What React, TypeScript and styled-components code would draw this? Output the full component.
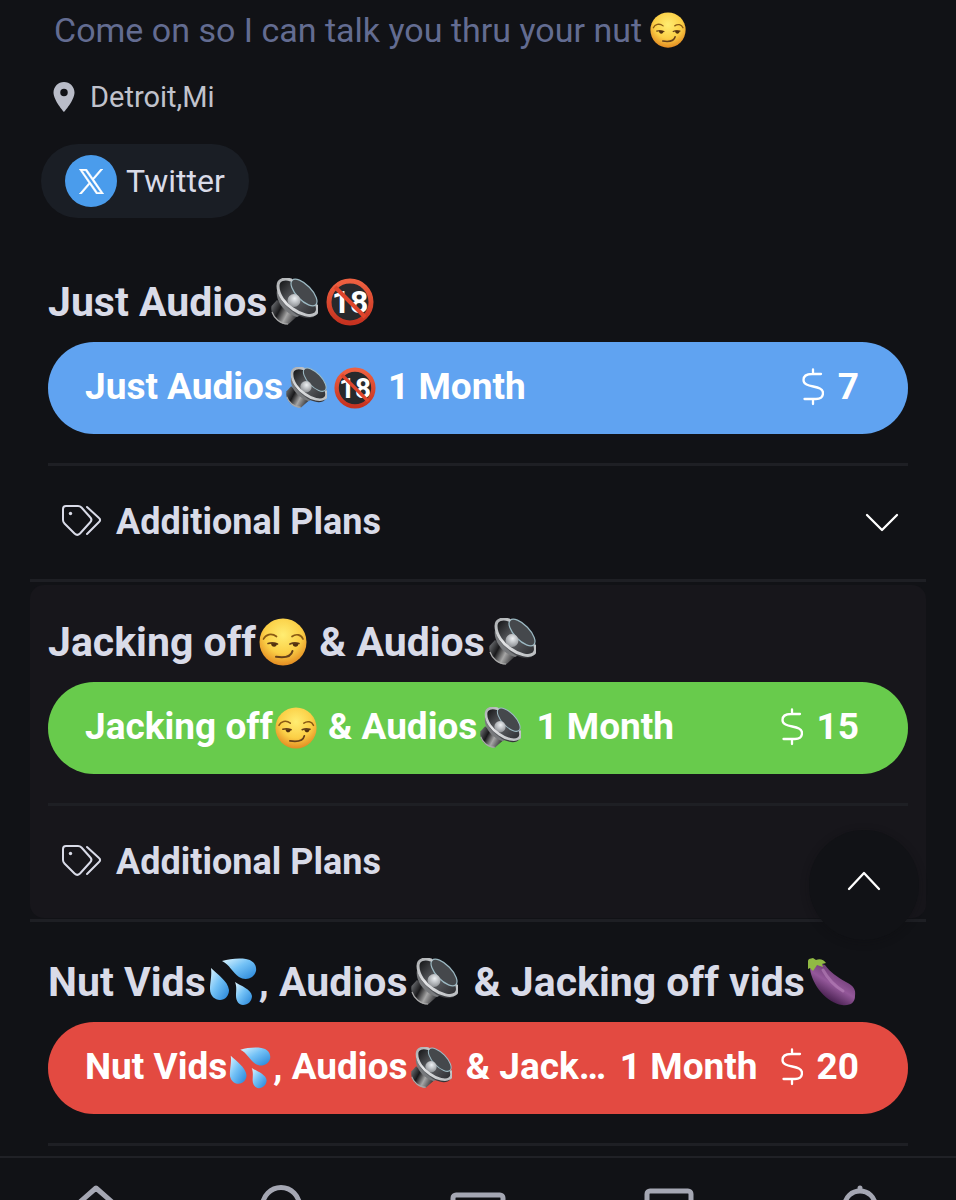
import type { ReactNode } from 'react'
import styled, { createGlobalStyle } from 'styled-components'

const GlobalStyle = createGlobalStyle`
  * {
    box-sizing: border-box;
  }
  body {
    margin: 0;
    background: #111216;
    font-family: Roboto, 'Liberation Sans', sans-serif;
  }
  h2, p {
    margin: 0;
  }
  button {
    border: 0;
    font-family: inherit;
    cursor: pointer;
  }
`
const Page = styled.div`
  display: flex;
  flex-direction: column;
  height: 100vh;
  color: #d9dbe8;
`
const Main = styled.main`
  flex: 1;
  min-height: 0;
  overflow: hidden;
  padding: 0 30px;
`
const Profile = styled.header`
  display: flex;
  flex-direction: column;
  align-items: flex-start;
  padding-left: 11px;
  margin-bottom: 27px;
`
const Tagline = styled.p`
  display: flex;
  align-items: center;
  gap: 6px;
  height: 60px;
  padding-left: 13px;
  font-size: 34px;
  color: #636c91;
`
const Location = styled.p`
  display: flex;
  align-items: center;
  gap: 8px;
  height: 40px;
  margin: 17px 0 27px 5px;
  font-size: 29px;
  color: #c0c2cc;
`
const SocialLink = styled.a`
  display: flex;
  align-items: center;
  gap: 9px;
  height: 74px;
  padding: 0 24px;
  border-radius: 37px;
  background: #1a1e25;
  color: #d9dbe8;
  font-size: 32px;
  text-decoration: none;
`
const SocialBadge = styled.span`
  display: flex;
  align-items: center;
  justify-content: center;
  width: 52px;
  height: 52px;
  border-radius: 50%;
  background: #4a9cec;
`
const PlanItem = styled.section<{ $raised?: boolean }>`
  padding: 33px 18px 0;
  border-radius: 14px;
  background: ${({ $raised }) => ($raised ? '#17161b' : 'transparent')};
`
const PlanTitle = styled.h2`
  height: 48px;
  margin-bottom: 16px;
  font-size: 41px;
  font-weight: 700;
  line-height: 48px;
  white-space: nowrap;

  svg {
    margin-left: 3px;
  }
`
const SubscribeButton = styled.button<{ $color: string }>`
  display: flex;
  align-items: center;
  width: 100%;
  height: 92px;
  padding: 0 49px 2px 37px;
  border-radius: 46px;
  background: ${({ $color }) => $color};
  color: #fff;
  font-size: 37px;
  font-weight: 700;
  line-height: 48px;
  white-space: nowrap;
`
const PlanName = styled.span`
  min-width: 0;
  overflow: hidden;
  text-overflow: ellipsis;
`
const Duration = styled.span`
  flex: none;
  margin: 0 23px 0 10px;
`
const Price = styled.span`
  display: flex;
  flex: none;
  align-items: center;
  gap: 14px;
  margin-left: auto;
`
const Divider = styled.hr`
  height: 3px;
  margin: 29px 0 0;
  border: 0;
  background: #1e1f24;
`
const PlanSeparator = styled(Divider)`
  margin: 1px 0 3px;
`
const PlansToggle = styled.button`
  display: flex;
  align-items: center;
  gap: 14px;
  width: 100%;
  height: 112px;
  padding: 0 9px 0 13px;
  background: none;
  color: #d9dbe8;
  font-size: 36px;
  font-weight: 700;

  svg:last-child {
    margin-left: auto;
  }
`
const EmojiSvg = styled.svg<{ $size: number; $wide: boolean }>`
  flex: none;
  width: ${({ $size }) => $size}px;
  height: ${({ $size }) => $size}px;
  margin: 0 ${({ $wide }) => ($wide ? 5 : 2)}px 0 2px;
  vertical-align: -10px;
`
const ScrollTopButton = styled.button`
  position: fixed;
  right: 37px;
  bottom: 260px;
  display: flex;
  align-items: center;
  justify-content: center;
  width: 110px;
  height: 110px;
  padding: 0 0 8px;
  border-radius: 50%;
  background: #111216;
  box-shadow: 0 2px 8px rgba(14, 14, 18, 0.3);
`
const NavBar = styled.nav`
  display: flex;
  flex: none;
  height: 44px;
  padding-top: 26px;
  overflow: hidden;
  border-top: 2px solid #202126;
`
const NavItem = styled.a`
  display: flex;
  flex: 1;
  justify-content: center;
`
const NavIcon = styled.svg`
  flex: none;
  width: 60px;
  height: 60px;
  fill: none;
  stroke: #a5a7b3;
  stroke-width: 5;
  stroke-linejoin: round;
  stroke-linecap: round;
`

type EmojiName = 'smirk' | 'speaker' | 'adults' | 'drops' | 'eggplant'

const emojiArt: Record<EmojiName, ReactNode> = {
  smirk: (
    <>
      <circle cx="24" cy="24" r="23.5" fill="url(#face)" />
      <g fill="none" stroke="#65401a" strokeLinecap="round" strokeWidth="1.7">
        <path d="M4.500 21c2-4.500 8-6.500 13-2.500M33 18.500c4-3 9-2 11 2.500" stroke="#8a5b14" />
        <path d="M9 25.500c3-1 6-1 9.500.500M31 26c3-1.500 6-1.500 9-.500" />
        <path d="M17 38.800c8 1.200 15 1 16.500-5.800" strokeWidth="2" />
      </g>
      <path d="M12 25.300h6c0 5-6 4.500-6 0zM33.500 25.300h6c0 5-6 4.500-6 0z" fill="#51310f" />
    </>
  ),
  speaker: (
    <>
      <path d="M7 22 1.500 28C0 36 7 46 18 46.500l9-8z" fill="url(#magnet)" />
      <path d="M2 34c2 6 8 12 16 12" fill="none" stroke="#aaa" strokeWidth="1.200" />
      <path d="M7 12c-2 9 6 23 20 27l6-3z" fill="#77797c" />
      <ellipse cx="27.500" cy="20.500" rx="25" ry="13.500" transform="rotate(43 27.500 20.500)" fill="url(#cone)" />
      <ellipse cx="34" cy="14.500" rx="17" ry="7.500" transform="rotate(46 34 14.500)" fill="#45484c" stroke="#9dbac4" strokeWidth="1.200" />
      <circle cx="24" cy="22.500" r="6.500" fill="url(#dome)" />
      <path d="M21 2C15 0 8 1 8 8c0 9 7 18 15 23 8 6 18 8 22 5 2-1 3-4 2-8" fill="none" stroke="url(#rim)" strokeWidth="3" strokeLinecap="round" />
    </>
  ),
  adults: (
    <>
      <circle cx="24" cy="24" r="21" fill="#28292c" />
      <text x="24" y="35" textAnchor="middle" fontFamily="Roboto, sans-serif" fontSize="32" fontWeight="700" fill="#fff">18</text>
      <circle cx="24" cy="24" r="21" fill="none" stroke="url(#ring)" strokeWidth="5" />
      <path d="M9 9l30 30" stroke="#df452c" strokeWidth="4" />
    </>
  ),
  drops: (
    <>
      <path d="M13 3C20 1 29 0 37 1c7 1 11 6 10 12-2 8-11 10-17 6C24 15 20 6 13 3z" fill="url(#water)" />
      <path d="M2 10c6 6 17 13 18 22 0 6-4 10-9 10S1 38 1 31c0-7 2-13 1-21z" fill="url(#water)" />
      <path d="M26 24c6 4 16 7 17 14 0 5-4 9-9 9-4 0-7-4-7-9 0-5 1-9-1-14z" fill="url(#water)" />
    </>
  ),
  eggplant: (
    <>
      <path d="M2 11c2-4 8-7 15-4 6 8 11 11 21 17 8 4 10 8 9 14 0 7-5 10-13 9C19 45 4 27 2 11z" fill="url(#skin)" />
      <path d="M15 12c5 9 10 15 20 21" fill="none" stroke="#bd89bf" strokeLinecap="round" strokeWidth="3" opacity=".55" />
      <path d="M1 1l4-1 3 2c4-2 8 0 10 3l-4 1 1 3-6-2-4 6-3-3-2 1C-2 8-1 4 1 1z" fill="#91b944" />
    </>
  ),
}

const emojiLabels: Record<EmojiName, string> = {
  smirk: 'smirking face',
  speaker: 'speaker',
  adults: 'no one under eighteen',
  drops: 'sweat droplets',
  eggplant: 'eggplant',
}

function Emoji({ name, size }: { name: EmojiName; size: number }) {
  return (
    <EmojiSvg $size={size} $wide={name === 'speaker'} viewBox="0 0 48 48" role="img" aria-label={emojiLabels[name]}>
      {emojiArt[name]}
    </EmojiSvg>
  )
}

// gradients shared by all the emoji
function EmojiDefs() {
  return (
    <svg width="0" height="0" style={{ position: 'absolute' }} aria-hidden="true">
      <defs>
        <radialGradient id="face" cx=".5" cy=".35" r=".65">
          <stop offset="0" stopColor="#ffed72" />
          <stop offset=".6" stopColor="#fbcf46" />
          <stop offset="1" stopColor="#e38b22" />
        </radialGradient>
        <linearGradient id="magnet" x1="0" y1=".3" x2="1" y2=".8">
          <stop offset="0" stopColor="#626467" />
          <stop offset=".3" stopColor="#19191b" />
          <stop offset=".6" stopColor="#a6a6a6" />
          <stop offset="1" stopColor="#252528" />
        </linearGradient>
        <linearGradient id="cone" x1="0" y1="0" x2="1" y2="0">
          <stop offset="0" stopColor="#151618" />
          <stop offset=".45" stopColor="#606266" />
          <stop offset="1" stopColor="#2b2c30" />
        </linearGradient>
        <linearGradient id="rim" x1="0" y1="0" x2="1" y2="1">
          <stop offset="0" stopColor="#a9acaf" />
          <stop offset=".4" stopColor="#e4e5e7" />
          <stop offset="1" stopColor="#b9bcbf" />
        </linearGradient>
        <radialGradient id="dome" cx=".55" cy=".35" r=".65">
          <stop offset="0" stopColor="#eef1f4" />
          <stop offset="1" stopColor="#8d9094" />
        </radialGradient>
        <linearGradient id="ring" x1="0" y1="0" x2="0" y2="1">
          <stop offset="0" stopColor="#ee6040" />
          <stop offset="1" stopColor="#c63220" />
        </linearGradient>
        <linearGradient id="water" x1="0" y1="0" x2="1" y2="1">
          <stop offset="0" stopColor="#e0f6ff" />
          <stop offset=".45" stopColor="#74c2f6" />
          <stop offset="1" stopColor="#2483d8" />
        </linearGradient>
        <linearGradient id="skin" x1=".7" y1=".2" x2=".3" y2=".8">
          <stop offset="0" stopColor="#6b3972" />
          <stop offset=".5" stopColor="#94589a" />
          <stop offset="1" stopColor="#482050" />
        </linearGradient>
      </defs>
    </svg>
  )
}

function DollarIcon() {
  return (
    <svg width="22" height="38" viewBox="0 0 22 38" fill="none" stroke="#fff" strokeWidth="2.3" strokeLinecap="round" role="img" aria-label="dollars">
      <path d="M11 1.500V6M11 31v5M19 6H10C4.500 6 1.500 8.500 1.500 12c0 9 19.500 4 19.500 13 0 3.500-2.500 6-7 6H2.500" />
    </svg>
  )
}

function TagsIcon() {
  return (
    <svg width="41" height="34" viewBox="0 0 41 34" fill="none" stroke="#d9dbe8" strokeWidth="2" strokeLinecap="round" strokeLinejoin="round" aria-hidden="true">
      <path d="M5 1h12c1.500 0 2.500.500 3.500 1.500L29 12c2 2 2 3.500 0 5.500L19 28.500c-2 2-3.500 2-5.500 0L3.500 18.500C2.500 17.500 2 16.500 2 15V4c0-2 1-3 3-3z" />
      <path d="M26 2l12 11c1.500 1.300 1.500 2.700 0 4L26 29" />
      <circle cx="9.500" cy="8.500" r="1.700" fill="#d9dbe8" stroke="none" />
    </svg>
  )
}

function ChevronIcon({ up = false }: { up?: boolean }) {
  return (
    <svg width="34" height="20" viewBox="0 0 34 20" fill="none" stroke="#fff" strokeWidth="2.3" strokeLinecap="round" strokeLinejoin="round" aria-hidden="true">
      <path d={up ? 'M2 18 17 2l15 16' : 'M2 3l15 15L32 3'} />
    </svg>
  )
}

type Part = string | { emoji: EmojiName }

type Plan = {
  id: string
  color: string
  price: number
  name: Part[]
}

const plans: Plan[] = [
  { id: 'audios', color: '#60a3f1', price: 7, name: ['Just Audios', { emoji: 'speaker' }, { emoji: 'adults' }] },
  {
    id: 'combo',
    color: '#68cb4c',
    price: 15,
    name: ['Jacking off', { emoji: 'smirk' }, ' & Audios', { emoji: 'speaker' }],
  },
  {
    id: 'vids',
    color: '#e34a41',
    price: 20,
    name: [
      'Nut Vids',
      { emoji: 'drops' },
      ', Audios',
      { emoji: 'speaker' },
      ' & Jacking off vids',
      { emoji: 'eggplant' },
    ],
  },
]

function PlanLabel({ name, size }: { name: Part[]; size: number }) {
  return (
    <>
      {name.map((part, i) => (typeof part === 'string' ? part : <Emoji key={i} name={part.emoji} size={size} />))}
    </>
  )
}

function PlanSection({ plan, index }: { plan: Plan; index: number }) {
  const isLast = index === plans.length - 1

  return (
    <>
      <PlanItem $raised={index % 2 === 1}>
        <PlanTitle>
          <PlanLabel name={plan.name} size={48} />
        </PlanTitle>
        <SubscribeButton type="button" $color={plan.color}>
          <PlanName>
            <PlanLabel name={plan.name} size={42} />
          </PlanName>
          <Duration>1 Month</Duration>
          <Price>
            <DollarIcon />
            {plan.price}
          </Price>
        </SubscribeButton>
        <Divider />
        {!isLast && (
          <PlansToggle type="button" aria-expanded="false">
            <TagsIcon />
            Additional Plans
            <ChevronIcon />
          </PlansToggle>
        )}
      </PlanItem>
      {!isLast && <PlanSeparator />}
    </>
  )
}

export default function App() {
  return (
    <Page>
      <GlobalStyle />
      <EmojiDefs />
      <Main>
        <Profile>
          <Tagline>
            Come on so I can talk you thru your nut
            <Emoji name="smirk" size={36} />
          </Tagline>
          <Location>
            <svg width="36" height="36" viewBox="0 0 24 24" fill="#b9bcc8" aria-hidden="true">
              <path d="M12 2C8.130 2 5 5.130 5 9c0 5.250 7 13 7 13s7-7.750 7-13c0-3.870-3.130-7-7-7zm0 9.500a2.500 2.500 0 1 1 0-5 2.500 2.500 0 0 1 0 5z" />
            </svg>
            Detroit,Mi
          </Location>
          <SocialLink href="#twitter">
            <SocialBadge>
              <svg width="25" height="25" viewBox="0 0 24 24" fill="#fff" stroke="#fff" strokeWidth=".6" aria-hidden="true">
                <path d="M14.234 10.162 22.977 0h-2.072l-7.591 8.824L7.251 0H.258l9.168 13.343L.258 24H2.330l8.016-9.318L16.749 24h6.993zm-2.837 3.299-.929-1.329L3.076 1.560h3.182l5.965 8.532.929 1.329 7.754 11.090h-3.182z" />
              </svg>
            </SocialBadge>
            Twitter
          </SocialLink>
        </Profile>
        {plans.map((plan, i) => (
          <PlanSection key={plan.id} plan={plan} index={i} />
        ))}
      </Main>
      <ScrollTopButton type="button" aria-label="Back to top">
        <ChevronIcon up />
      </ScrollTopButton>
      <NavBar>
        <NavItem href="#home" aria-label="Home">
          <NavIcon viewBox="0 0 60 60">
            <path d="M6 25 30 4l24 21M12 21v34h36V21" />
          </NavIcon>
        </NavItem>
        <NavItem href="#search" aria-label="Search">
          <NavIcon viewBox="0 0 60 60">
            <circle cx="24" cy="22" r="18.500" />
            <path d="M38 36l16 17" />
          </NavIcon>
        </NavItem>
        <NavItem href="#wallet" aria-label="Wallet">
          <NavIcon viewBox="0 0 60 60">
            <rect x="5" y="11" width="50" height="38" rx="3" />
            <path d="M5 30h50" />
          </NavIcon>
        </NavItem>
        <NavItem href="#messages" aria-label="Messages">
          <NavIcon viewBox="0 0 60 60">
            <path d="M11 7h38a3 3 0 0 1 3 3v36H20L8 56V10a3 3 0 0 1 3-3z" />
          </NavIcon>
        </NavItem>
        <NavItem href="#alerts" aria-label="Notifications">
          <NavIcon viewBox="0 0 60 60">
            <path d="M30 4v3M15 46V21c0-8 7-14 15-14s15 6 15 14v25zM9 46h42" />
          </NavIcon>
        </NavItem>
      </NavBar>
    </Page>
  )
}
